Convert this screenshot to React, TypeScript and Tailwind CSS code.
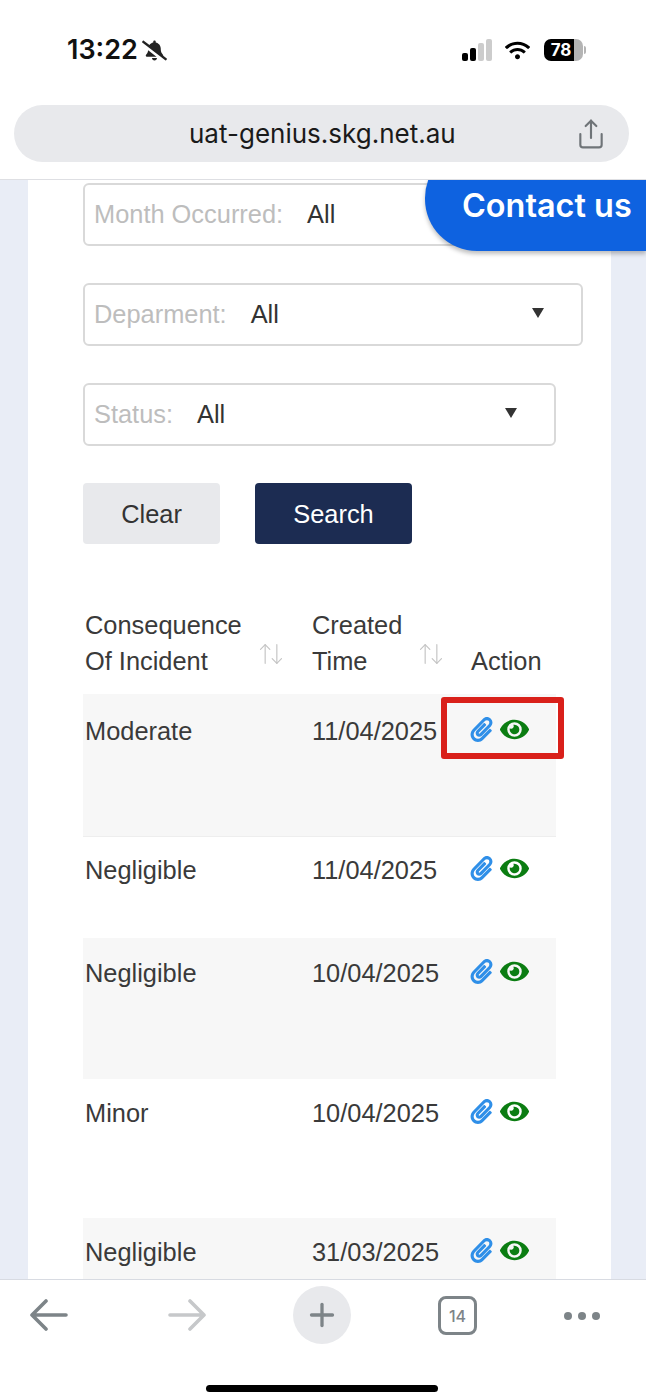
import { ArrowUpDown, Share, Plus } from 'lucide-react';
import { FaBellSlash, FaEye, FaPaperclip, FaWifi } from 'react-icons/fa';

const rows = [
  { level: 'Moderate', date: '11/04/2025', h: 'h-[142px] pt-[19px] bg-[#f7f7f7]', boxed: true },
  { level: 'Negligible', date: '11/04/2025', h: 'h-[102px] pt-[15px] border-t border-[#eeeeee]', boxed: false },
  { level: 'Negligible', date: '10/04/2025', h: 'h-[141px] pt-[17px] bg-[#f7f7f7]', boxed: false },
  { level: 'Minor', date: '10/04/2025', h: 'h-[139px] pt-[16px]', boxed: false },
  { level: 'Negligible', date: '31/03/2025', h: 'h-[61px] pt-[16px] bg-[#f7f7f7]', boxed: false },
];

function FilterBox({ label, width, gap }: { label: string; width: string; gap: string }) {
  return (
    <div className={`${width} h-[63px] flex items-center justify-between rounded-[6px] border-2 border-[#d9d9d9] bg-white pl-[9px]`}>
      <div className="flex items-center pb-[2px]">
        <span className="text-[#bdbdbd]">{label}</span>
        <span className={`${gap} text-[#333333]`}>All</span>
      </div>
      <span className="mr-[37px] mb-[4px] w-0 h-0 border-x-[6px] border-x-transparent border-t-[10px] border-t-[#333333]" />
    </div>
  );
}

export default function App() {
  return (
    <div className="w-[646px] h-[1400px] flex flex-col bg-white overflow-hidden font-['Liberation_Sans',sans-serif] text-[25.4px] leading-[36px] text-[#3a3a3a]">
      {/* browser chrome */}
      <div className="h-[180px] shrink-0 border-b border-[#dedfe3] pl-[14px] pr-[17px] pt-[32px]">
        <div className="h-[36px] flex items-center justify-between pl-[53px] pr-[43px]">
          <div className="flex items-center gap-[4px] font-['Inter',sans-serif] font-semibold text-[27px] text-[#111111]">
            13:22 <FaBellSlash size={25} className="text-[#222222]" />
          </div>
          <div className="flex items-center">
            <div className="flex items-end gap-[2px] h-[22px] mr-[13px]">
              <div className="w-[6px] h-[8px] rounded-[2px] bg-black" />
              <div className="w-[6px] h-[13px] rounded-[2px] bg-black" />
              <div className="w-[6px] h-[18px] rounded-[2px] bg-[#cccccc]" />
              <div className="w-[6px] h-[22px] rounded-[2px] bg-[#cccccc]" />
            </div>
            <FaWifi size={25} className="text-black mr-[14px]" />
            <div className="w-[39px] h-[22px] rounded-[7px] bg-[linear-gradient(90deg,#000_78%,#b4b4b4_78%)] flex items-center justify-center font-['Inter',sans-serif] font-bold text-[17px] text-white pr-[5px]">
              78
            </div>
            <div className="w-[2px] h-[8px] ml-[1px] rounded-r bg-[#b4b4b4]" />
          </div>
        </div>
        <div className="mt-[37px] h-[57px] rounded-full bg-[#e8e9ec] flex items-center justify-between pl-[175px] pr-[22px]">
          <span className="font-['Inter',sans-serif] text-[26px] text-[#1a1a1a]">uat-genius.skg.net.au</span>
          <Share size={32} strokeWidth={1.6} className="text-[#6f7478]" />
        </div>
      </div>

      {/* page */}
      <div className="relative flex-1 min-h-0 overflow-hidden bg-[#e9edf6] pr-[35px] pl-[28px]">
        <div className="h-full bg-white pl-[55px] pt-[3px]">
          <div className="flex flex-col gap-[37px]">
            <FilterBox label="Month Occurred:" width="w-[500px]" gap="ml-[24px]" />
            <FilterBox label="Deparment:" width="w-[500px]" gap="ml-[24px]" />
            <FilterBox label="Status:" width="w-[473px]" gap="ml-[24px]" />
          </div>

          <div className="mt-[37px] flex gap-[35px]">
            <button className="w-[137px] h-[61px] rounded-[4px] bg-[#e8e9ec] text-[#333333]">Clear</button>
            <button className="w-[157px] h-[61px] rounded-[4px] bg-[#1c2c52] text-white">Search</button>
          </div>

          <div className="w-[473px] mt-[63px] h-[87px] flex items-start">
            <div className="w-[227px] pl-[2px] relative">
              Consequence<br />Of Incident
              <ArrowUpDown size={28} strokeWidth={1} className="absolute right-[25px] top-[33px] text-[#c4c4c4]" />
            </div>
            <div className="w-[160px] pl-[2px] relative">
              Created<br />Time
              <ArrowUpDown size={28} strokeWidth={1} className="absolute right-[25px] top-[33px] text-[#c4c4c4]" />
            </div>
            <div className="flex-1 pl-[1px] pt-[36px]">Action</div>
          </div>

          <div className="w-[473px]">
            {rows.map((r, i) => (
              <div key={i} className={`flex items-start ${r.h}`}>
                <div className="w-[227px] pl-[2px]">{r.level}</div>
                <div className="w-[158px] pl-[2px]">{r.date}</div>
                <div className="relative flex items-center gap-[6px] pl-[1px] h-[32px]">
                  <FaPaperclip size={25} className="text-[#2f8fe8]" />
                  <FaEye size={29} className="text-[#0b7d12]" />
                  {r.boxed && (
                    <div className="absolute left-[-27px] top-[-16px] w-[123px] h-[62px] rounded-[3px] border-[6px] border-[#d9201a]" />
                  )}
                </div>
              </div>
            ))}
          </div>
        </div>

        {/* floating contact button */}
        <div className="absolute right-0 top-[-34px] w-[221px] h-[105px] rounded-l-[52px] bg-[#0e62e0] shadow-[0_3px_4px_rgba(0,0,0,0.25)] flex items-end pl-[37px] pb-[27px]">
          <span className="font-['Inter',sans-serif] font-semibold text-[32.4px] leading-[36px] text-white whitespace-nowrap">Contact us</span>
        </div>
      </div>

      {/* bottom toolbar */}
      <div className="h-[121px] shrink-0 border-t border-[#d8dbe2] flex flex-col items-center">
        <div className="w-full h-[105px] flex items-start pl-[30px] pt-[6px] text-[#7d8488]">
          <svg width="38" height="32" viewBox="0 0 38 32" fill="none" stroke="currentColor" strokeWidth="3.6" strokeLinecap="round" strokeLinejoin="round" className="mt-[13px]">
            <path d="M36 16H3M16 2 2 16l14 14" />
          </svg>
          <svg width="38" height="32" viewBox="0 0 38 32" fill="none" stroke="#c6c8ca" strokeWidth="3.6" strokeLinecap="round" strokeLinejoin="round" className="ml-[100px] mt-[13px]">
            <path d="M2 16h33M22 2l14 14-14 14" />
          </svg>
          <div className="ml-[87px] w-[58px] h-[58px] rounded-full bg-[#e8e9ec] flex items-center justify-center">
            <Plus size={36} strokeWidth={2.2} />
          </div>
          <div className="ml-[87px] mt-[10px] w-[39px] h-[39px] rounded-[8px] border-[3px] border-[#7d8488] flex items-center justify-center font-['Inter',sans-serif] text-[16px] font-medium">
            14
          </div>
          <div className="ml-[87px] mt-[26px] flex gap-[6px]">
            <div className="w-[8px] h-[8px] rounded-full bg-[#7d8488]" />
            <div className="w-[8px] h-[8px] rounded-full bg-[#7d8488]" />
            <div className="w-[8px] h-[8px] rounded-full bg-[#7d8488]" />
          </div>
        </div>
        <div className="w-[232px] h-[7px] -ml-[2px] rounded-full bg-black" />
      </div>
    </div>
  );
}
